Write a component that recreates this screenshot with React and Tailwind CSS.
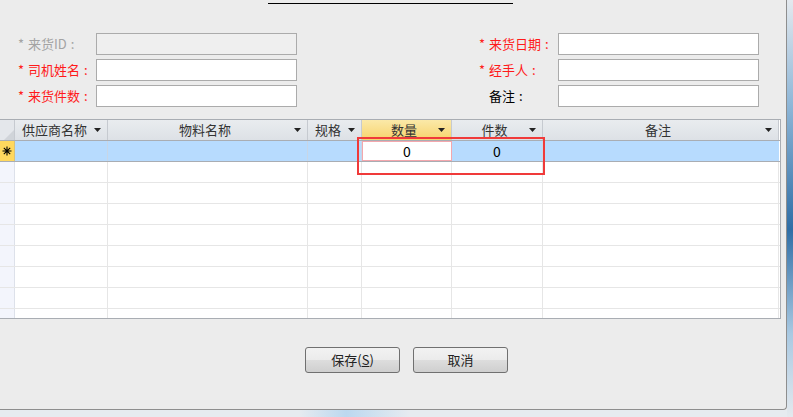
import React from 'react';

const font = { fontFamily: '"Noto Sans CJK SC", "Noto Sans", sans-serif' };

const cols = [
  { key: 'sel', w: 'w-[15px]' },
  { key: '供应商名称', w: 'w-[93px]', left: true },
  { key: '物料名称', w: 'w-[200px]' },
  { key: '规格', w: 'w-[54px]', left: true },
  { key: '数量', w: 'w-[90px]', active: true },
  { key: '件数', w: 'w-[91px]' },
  { key: '备注', w: 'w-[236px]' },
];

function Caret() {
  return (
    <svg width="7" height="4" viewBox="0 0 7 4" className="shrink-0">
      <path d="M0 0H7L3.5 4Z" fill="#222" />
    </svg>
  );
}

function Field({ label, star, tone, disabled, labelW }) {
  const color = tone === 'gray' ? 'text-[#a3a3a3]' : tone === 'red' ? 'text-[#ff1a1a]' : 'text-black';
  return (
    <div className="flex items-center h-[22px]">
      <div className={`${labelW} text-[13px] whitespace-pre ${color} flex`}>
        <span className="w-[10px]">{star ? '*' : ''}</span>
        <span>{label}</span>
        <span className="ml-[4px]">:</span>
      </div>
      <div className={`h-[22px] w-[201px] border border-[#ababab] ${disabled ? 'bg-[#efefef]' : 'bg-white'}`} />
    </div>
  );
}

function HeaderRow() {
  return (
    <div className="flex h-[21px] border-b border-[#a9adb3]">
      {cols.map((c) => {
        if (c.key === 'sel') {
          return (
            <div key={c.key} className={`${c.w} shrink-0 bg-[#e4e7eb] border-r border-[#c6cad0] flex items-end justify-end`}>
              <svg width="10" height="10" viewBox="0 0 10 10"><path d="M10 0V10H0Z" fill="#d0d4d9" /></svg>
            </div>
          );
        }
        return (
          <div
            key={c.key}
            className={`${c.w} shrink-0 flex items-center pr-[6px] border-r border-[#c6cad0] text-[13px] text-[#333] ${
              c.active ? 'bg-gradient-to-b from-[#fbe9a8] to-[#f7d36a]' : 'bg-gradient-to-b from-[#e9ecef] to-[#dde1e6]'
            }`}
          >
            <span className={c.left ? 'pl-[7px] flex-1' : 'flex-1 text-center pl-[8px]'}>{c.key}</span>
            <Caret />
          </div>
        );
      })}
    </div>
  );
}

function NewRow() {
  return (
    <div className="flex h-[21px] border-b border-[#a9adb3]">
      <div className="w-[15px] shrink-0 bg-[#ffd85e] border-r border-[#d8c27a] flex items-center justify-center">
        <svg width="10" height="10" viewBox="0 0 10 10">
          <path d="M5 0.5V9.5M0.5 5H9.5M1.8 1.8L8.2 8.2M8.2 1.8L1.8 8.2" stroke="#000" strokeWidth="1.1" />
        </svg>
      </div>
      <div className="w-[93px] shrink-0 bg-[#b7dbfe] border-r border-[#c8d6e6]" />
      <div className="w-[200px] shrink-0 bg-[#b7dbfe] border-r border-[#c8d6e6]" />
      <div className="w-[54px] shrink-0 bg-[#b7dbfe] border-r border-[#c8d6e6]" />
      <div className="w-[90px] shrink-0 bg-white border border-[#f4a7ad] flex items-center justify-center text-[14px] text-black">0</div>
      <div className="w-[91px] shrink-0 bg-[#b7dbfe] border-r border-[#c8d6e6] flex items-center justify-center text-[14px] text-black">0</div>
      <div className="w-[236px] shrink-0 bg-[#b7dbfe]" />
    </div>
  );
}

function EmptyRow() {
  return (
    <div className="flex h-[21px] border-b border-[#e6e6e6] bg-white">
      <div className="w-[15px] shrink-0 bg-[#f3f5fc] border-r border-[#dde1ea]" />
      <div className="w-[93px] shrink-0 border-r border-[#e6e6e6]" />
      <div className="w-[200px] shrink-0 border-r border-[#e6e6e6]" />
      <div className="w-[54px] shrink-0 border-r border-[#e6e6e6]" />
      <div className="w-[90px] shrink-0 border-r border-[#e6e6e6]" />
      <div className="w-[91px] shrink-0 border-r border-[#e6e6e6]" />
      <div className="w-[236px] shrink-0 border-r border-[#e6e6e6]" />
    </div>
  );
}

function Button({ children }) {
  return (
    <button className="w-[95px] h-[26px] rounded-[3px] border border-[#707070] bg-[linear-gradient(#f2f2f2_0%,#ebebeb_50%,#dddddd_51%,#cfcfcf_100%)] text-[13px] text-[#222] flex items-center justify-center">
      {children}
    </button>
  );
}

export default function App() {
  return (
    <div className="w-[793px] h-[417px] flex bg-[#ececec] overflow-hidden" style={font}>
      <div className="w-[787px] h-[417px] flex flex-col shrink-0">
        <div className="w-[787px] h-[410px] flex flex-col border-r border-b border-[#8e8e8e] rounded-br-[4px] bg-[#ececec]">
          {/* title underline */}
          <div className="h-[4px] ml-[268px] w-[245px] border-b border-black" />

          {/* form */}
          <div className="mt-[29px] flex">
            <div className="pl-[18px] flex flex-col gap-[4px]">
              <Field star label="来货ID" tone="gray" disabled labelW="w-[78px]" />
              <Field star label="司机姓名" tone="red" labelW="w-[78px]" />
              <Field star label="来货件数" tone="red" labelW="w-[78px]" />
            </div>
            <div className="ml-[182px] flex flex-col gap-[4px]">
              <Field star label="来货日期" tone="red" labelW="w-[79px]" />
              <Field star label="经手人" tone="red" labelW="w-[79px]" />
              <Field label="备注" tone="black" labelW="w-[79px]" />
            </div>
          </div>

          {/* grid */}
          <div className="relative mt-[12px] w-[781px] h-[200px] border-t border-r border-b border-[#a9adb3] bg-white overflow-hidden">
            <HeaderRow />
            <NewRow />
            {Array.from({ length: 9 }).map((_, i) => (
              <EmptyRow key={i} />
            ))}
            <div className="absolute left-[357px] top-[17px] w-[188px] h-[38px] border-2 border-[#f03a3a]" />
          </div>

          {/* buttons */}
          <div className="mt-[28px] flex gap-[13px] pl-[305px]">
            <Button>保存(<span className="underline">S</span>)</Button>
            <Button>取消</Button>
          </div>
        </div>
        <div className="flex-1 bg-[linear-gradient(90deg,#e6ebf0_0%,#e6ebf0_38%,#bcd8ef_44%,#e6ebf0_52%,#e6ebf0_100%)]" />
      </div>
      <div className="w-[6px] h-[417px] bg-[linear-gradient(180deg,#e4e9ee_0%,#8fb7d8_25%,#2f6ea6_55%,#a9c9e2_80%,#e4e9ee_100%)]" />
    </div>
  );
}
